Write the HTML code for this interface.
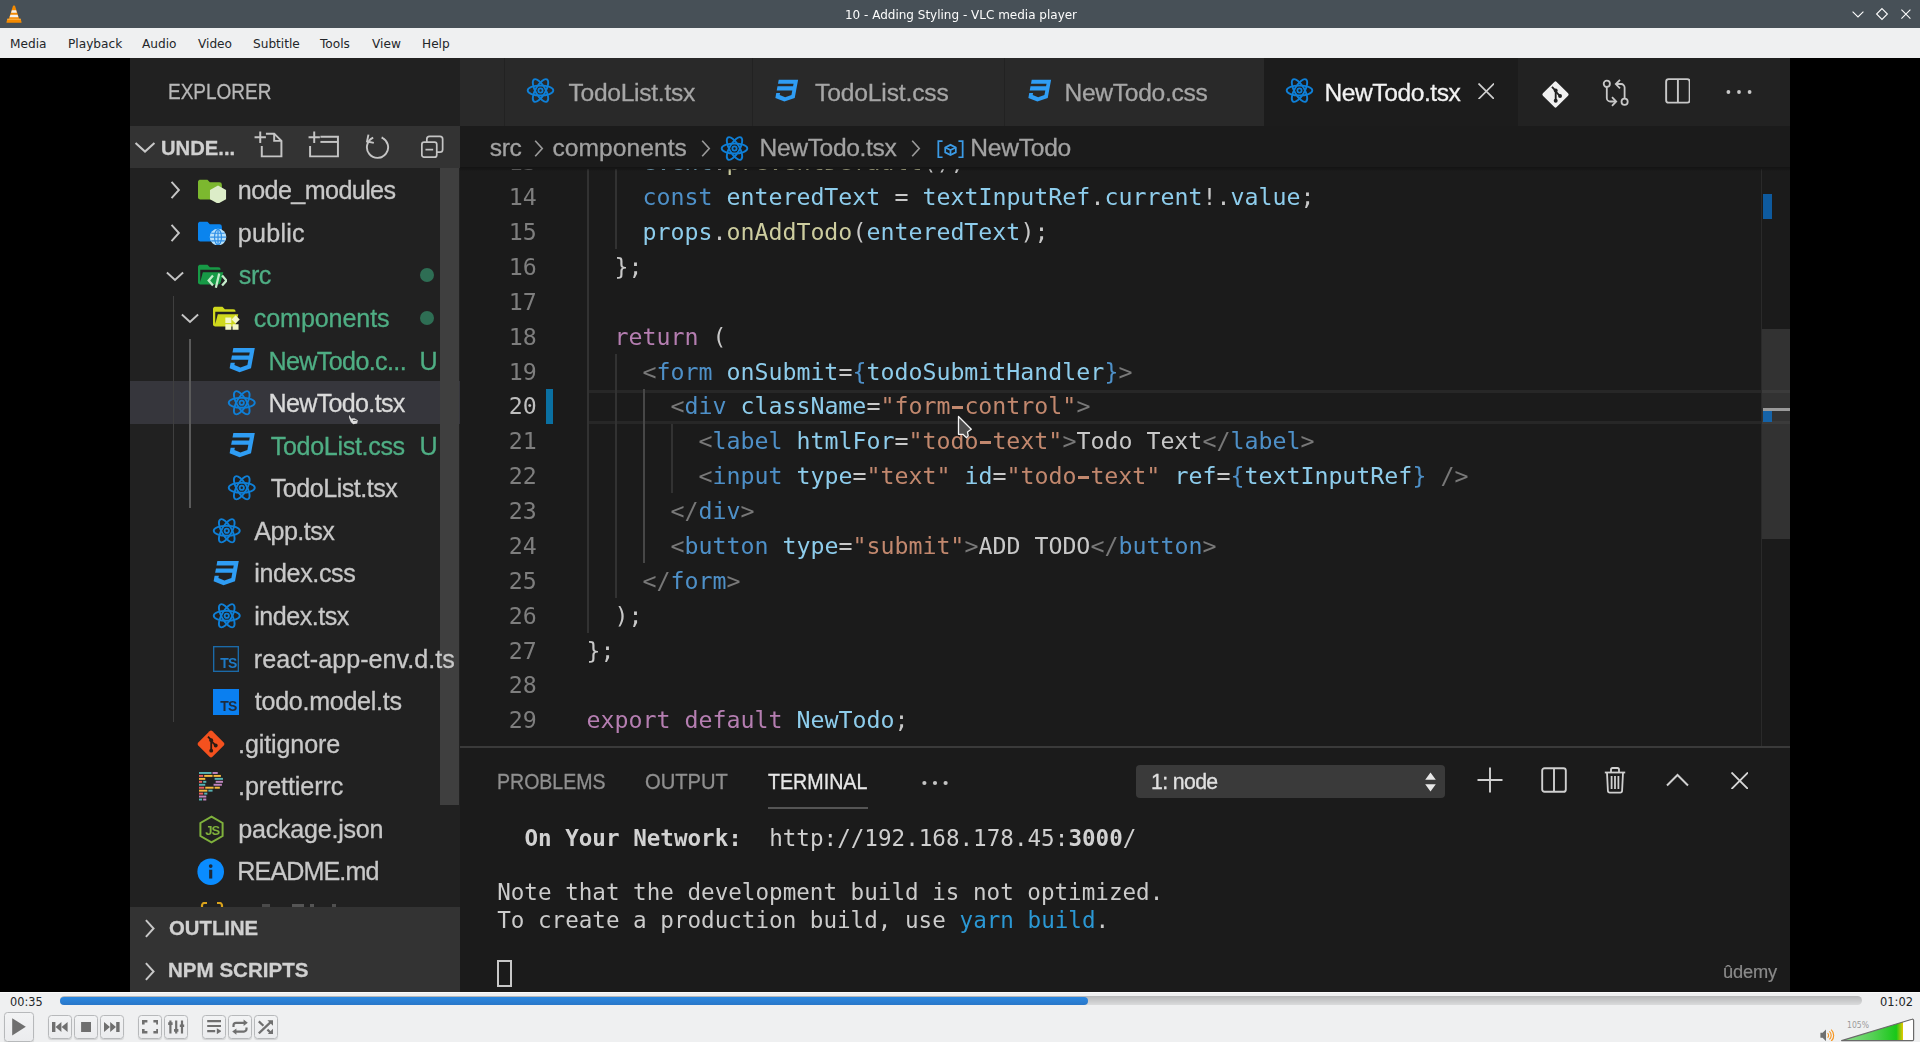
<!DOCTYPE html>
<html lang="en">
<head>
<meta charset="utf-8">
<title>10 - Adding Styling - VLC media player</title>
<style>
*{box-sizing:border-box;margin:0;padding:0}
html,body{width:1920px;height:1042px;overflow:hidden;background:#eff0f1}
body{position:relative;font-family:"DejaVu Sans","Liberation Sans",sans-serif;color:#232629}
.abs{position:absolute}
.t{position:absolute;white-space:pre;line-height:1}
.fs{font-family:"Liberation Sans",sans-serif}
#vsin .fs{-webkit-text-stroke:0.3px currentColor}
.fm{font-family:"DejaVu Sans Mono","Liberation Mono",monospace}
.fu{font-family:"DejaVu Sans","Liberation Sans",sans-serif}
#titlebar{position:absolute;left:0;top:0;width:1920px;height:28px;background:#475057}
#title{position:absolute;left:1px;top:1px;width:1920px;height:27px;line-height:29px;text-align:center;color:#fcfcfc;font-size:12px;will-change:transform}
#menubar{position:absolute;left:0;top:28px;width:1920px;height:30px;background:#eff0f1}
#menubar span{position:absolute;top:0;height:30px;line-height:32px;font-size:12.15px;color:#232629;white-space:nowrap}
#video{position:absolute;left:0;top:58px;width:1920px;height:934px;background:#000;overflow:hidden}
#vs{position:absolute;left:130px;top:0;width:1660px;height:934px;background:#1b1b1b;overflow:hidden}
#vsin{position:absolute;left:-130px;top:-58px;width:1920px;height:1042px;filter:blur(0.65px);will-change:transform}
.btn{border:1px solid #b7b9bb;border-radius:3.5px;background:linear-gradient(#f2f3f4,#ebecee);box-shadow:0 1px 1px rgba(0,0,0,0.13)}
</style>
</head>
<body>
<div id="titlebar"></div>
<div id="title">10 - Adding Styling - VLC media player</div>
<svg class="abs" style="left:1850.0px;top:6.0px" width="16.0" height="16.0" viewBox="0 0 16 16" ><path d="M2.600 5.600L8 11L13.400 5.600" fill="none" stroke="#fcfcfc" stroke-width="1.1"/></svg>
<svg class="abs" style="left:1874.0px;top:6.0px" width="16.0" height="16.0" viewBox="0 0 16 16" ><path d="M8 2.600L13.400 8L8 13.400L2.600 8z" fill="none" stroke="#fcfcfc" stroke-width="1.1"/></svg>
<svg class="abs" style="left:1898.0px;top:6.0px" width="16.0" height="16.0" viewBox="0 0 16 16" ><path d="M3.400 3.600L12.400 12.600M12.400 3.600L3.400 12.600" fill="none" stroke="#fcfcfc" stroke-width="1.1"/></svg>
<svg class="abs" style="left:5.4px;top:4.3px" width="20.0" height="20.0" viewBox="0 0 20 20" ><path d="M8 1.800q1-0.700 2 0l4.200 13.200H3.800z" fill="#f58a00"/><path d="M6.900 6.300h4.200l0.800 2.500H6.100z" fill="#f2f2f2"/><path d="M5.400 10.700h7.200l0.800 2.500H4.600z" fill="#f2f2f2"/><path d="M2.400 14.800h13.200l1 3.500q0.100 0.400-0.400 0.400H1.800q-0.500 0-0.400-0.400z" fill="#f58a00"/><path d="M2.400 14.800h13.200l0.300 1H2.100z" fill="#f9b450"/></svg>
<div id="menubar">
<span style="left:10px">Media</span>
<span style="left:68px">Playback</span>
<span style="left:142px">Audio</span>
<span style="left:198px">Video</span>
<span style="left:253px">Subtitle</span>
<span style="left:320px">Tools</span>
<span style="left:372px">View</span>
<span style="left:422px">Help</span>
</div>
<div id="video"><div id="vs"><div id="vsin">
<div class="abs" style="left:130px;top:58px;width:330px;height:934px;background:#212121"></div>
<span class="t fs" style="left:168.3px;top:81.2px;font-size:22.0px;color:#b8b8b8;transform:scaleX(0.8632);transform-origin:0 0;">EXPLORER</span>
<div class="abs" style="left:130px;top:126px;width:330px;height:42px;background:#333333"></div>
<svg class="abs" style="left:131.2px;top:133.0px" width="28.0" height="28.0" viewBox="0 0 16 16" ><path fill="none" stroke="#c8c8c8" stroke-width="1.15" d="M2.6 5.7 L8 10.6 L13.4 5.7"/></svg>
<span class="t fs" style="left:160.6px;top:137.6px;font-size:20.8px;color:#d0d0d0;font-weight:bold;transform:scaleX(0.9720);transform-origin:0 0;">UNDE...</span>
<svg class="abs" style="left:252.6px;top:129.8px" width="31.0" height="29.0" viewBox="0 0 30 28" ><g fill="none" stroke="#c5c5c5" stroke-width="1.9"><path d="M7 1.5v11M1.5 7h11"/><path d="M12.5 3.5h8l7 7v15h-19v-10"/><path d="M20.5 3.5v7h7"/></g></svg>
<svg class="abs" style="left:306.6px;top:129.8px" width="33.0" height="29.0" viewBox="0 0 32 28" ><g fill="none" stroke="#c5c5c5" stroke-width="1.9"><path d="M7 1.5v11M1.5 7h11"/><path d="M13 6.5h17v19h-27v-10"/><path d="M13 11.5h17"/></g></svg>
<svg class="abs" style="left:364.0px;top:133.0px" width="27.0" height="26.0" viewBox="0 0 27 26" ><g fill="none" stroke="#c5c5c5" stroke-width="1.9"><path d="M9.2 4.6A10.6 10.6 0 1 0 17.6 4.5"/><path d="M3.6 2.2v7h7" transform="rotate(12 7 6)"/></g></svg>
<svg class="abs" style="left:420.0px;top:134.6px" width="24.5" height="23.5" viewBox="0 0 26 26" ><g fill="none" stroke="#c5c5c5" stroke-width="1.9"><rect x="1.5" y="8" width="16.5" height="16.5" rx="2.5"/><path d="M7 8V4.5a3 3 0 0 1 3-3h11.5a3 3 0 0 1 3 3V16a3 3 0 0 1-3 3H18"/><path d="M5.5 16.2h8.5"/></g></svg>
<div class="abs" style="left:130px;top:381px;width:330px;height:42.5px;background:#36363c"></div>
<div class="abs" style="left:440.3px;top:168px;width:19.2px;height:637px;background:#3f3f3f"></div>
<div class="abs" style="left:459.5px;top:168px;width:0.500px;height:739px;background:#262626"></div>
<div class="abs" style="left:173.3px;top:296px;width:1.2px;height:426px;background:#3f3f3f"></div>
<div class="abs" style="left:189px;top:339px;width:1.6px;height:169px;background:#5a5a5a"></div>
<span class="t fs" style="left:237.8px;top:178.2px;font-size:25.1px;color:#c8c8c8;letter-spacing:-0.58px;">node_modules</span>
<span class="t fs" style="left:237.8px;top:220.7px;font-size:25.1px;color:#c8c8c8;letter-spacing:0.26px;">public</span>
<span class="t fs" style="left:238.8px;top:263.3px;font-size:25.1px;color:#4fae84;letter-spacing:-0.45px;">src</span>
<span class="t fs" style="left:253.8px;top:305.9px;font-size:25.1px;color:#4fae84;letter-spacing:-0.10px;">components</span>
<span class="t fs" style="left:268.5px;top:348.5px;font-size:25.1px;color:#4fae84;letter-spacing:-0.63px;">NewTodo.c...</span>
<span class="t fs" style="left:268.5px;top:391.1px;font-size:25.1px;color:#dadada;letter-spacing:-0.68px;">NewTodo.tsx</span>
<span class="t fs" style="left:270.8px;top:433.6px;font-size:25.1px;color:#4fae84;letter-spacing:-0.34px;">TodoList.css</span>
<span class="t fs" style="left:270.8px;top:476.2px;font-size:25.1px;color:#c8c8c8;letter-spacing:-0.49px;">TodoList.tsx</span>
<span class="t fs" style="left:254.3px;top:518.8px;font-size:25.1px;color:#c8c8c8;letter-spacing:-0.54px;">App.tsx</span>
<span class="t fs" style="left:254.3px;top:561.4px;font-size:25.1px;color:#c8c8c8;letter-spacing:-0.39px;">index.css</span>
<span class="t fs" style="left:254.3px;top:604.0px;font-size:25.1px;color:#c8c8c8;letter-spacing:-0.51px;">index.tsx</span>
<span class="t fs" style="left:253.8px;top:646.5px;font-size:25.1px;color:#c8c8c8;letter-spacing:0.04px;">react-app-env.d.ts</span>
<span class="t fs" style="left:254.8px;top:689.1px;font-size:25.1px;color:#c8c8c8;letter-spacing:-0.29px;">todo.model.ts</span>
<span class="t fs" style="left:238.1px;top:731.7px;font-size:25.1px;color:#c8c8c8;letter-spacing:-0.13px;">.gitignore</span>
<span class="t fs" style="left:238.1px;top:774.3px;font-size:25.1px;color:#c8c8c8;letter-spacing:-0.08px;">.prettierrc</span>
<span class="t fs" style="left:238.3px;top:816.9px;font-size:25.1px;color:#c8c8c8;letter-spacing:-0.25px;">package.json</span>
<span class="t fs" style="left:237.3px;top:859.4px;font-size:25.1px;color:#c8c8c8;letter-spacing:-0.89px;">README.md</span>
<span class="t fs" style="left:419.6px;top:348.5px;font-size:25.1px;color:#4fae84;">U</span>
<span class="t fs" style="left:419.6px;top:433.6px;font-size:25.1px;color:#4fae84;">U</span>
<div class="abs" style="left:419.5px;top:260.3px;width:14.2px;height:14.2px;border-radius:50%;background:#2e6e54;margin-top:8px"></div>
<div class="abs" style="left:419.5px;top:302.9px;width:14.2px;height:14.2px;border-radius:50%;background:#2e6e54;margin-top:8px"></div>
<svg class="abs" style="left:162.5px;top:178.4px" width="24.0" height="24.0" viewBox="0 0 16 16" ><path fill="none" stroke="#c5c5c5" stroke-width="1.3" d="M5.7 2.6 L10.6 8 L5.7 13.4"/></svg>
<svg class="abs" style="left:162.5px;top:221.0px" width="24.0" height="24.0" viewBox="0 0 16 16" ><path fill="none" stroke="#c5c5c5" stroke-width="1.3" d="M5.7 2.6 L10.6 8 L5.7 13.4"/></svg>
<svg class="abs" style="left:162.5px;top:263.7px" width="24.0" height="24.0" viewBox="0 0 16 16" ><path fill="none" stroke="#c5c5c5" stroke-width="1.3" d="M2.6 5.7 L8 10.6 L13.4 5.7"/></svg>
<svg class="abs" style="left:178.2px;top:306.3px" width="24.0" height="24.0" viewBox="0 0 16 16" ><path fill="none" stroke="#c5c5c5" stroke-width="1.3" d="M2.6 5.7 L8 10.6 L13.4 5.7"/></svg>
<svg class="abs" style="left:197.6px;top:178.6px" width="29.0" height="24.0" viewBox="0 0 24 20" ><path fill="#7cb82f" d="M10 4H4c-1.11 0-2 .89-2 2v12c0 1.1.9 2 2 2h16c1.1 0 2-.9 2-2V8a2 2 0 0 0-2-2h-8l-2-2z" transform="translate(-2.2,-3.4) scale(1.0,1.02)"/><path fill="#dcedc8" d="M16.6 5.400 L23.300 9.200 L23.300 16.800 L16.600 20.600 L9.900 16.800 L9.900 9.200 z"/></svg>
<svg class="abs" style="left:197.6px;top:221.2px" width="29.0" height="24.0" viewBox="0 0 24 20" ><path fill="#0a84ee" d="M10 4H4c-1.11 0-2 .89-2 2v12c0 1.1.9 2 2 2h16c1.1 0 2-.9 2-2V8a2 2 0 0 0-2-2h-8l-2-2z" transform="translate(-2.2,-3.4) scale(1.0,1.02)"/><circle cx="16.600" cy="13.400" r="6.900" fill="#b9e2fb"/><g fill="none" stroke="#2f8fe6" stroke-width="1"><ellipse cx="16.600" cy="13.400" rx="2.900" ry="6.400"/><path d="M10 13.400h13.200M16.600 6.800v13.200M11 10.200h11.200M11 16.600h11.200"/></g></svg>
<svg class="abs" style="left:197.6px;top:263.8px" width="29.0" height="24.0" viewBox="0 0 24 20" ><path fill="#179a46" d="M19 20H4c-1.11 0-2-.9-2-2V6c0-1.11.89-2 2-2h6l2 2h7a2 2 0 0 1 2 2H4v10l2.14-8h17.07l-2.28 8.5c-.23.87-1.01 1.5-1.93 1.5z" transform="translate(-2.2,-3.4) scale(1.0,1.02)"/><g fill="none" stroke="#c4ecca" stroke-width="1.900"><path d="M12.400 9.600 L8.800 13.800 L12.400 18"/><path d="M20 9.600 L23.600 13.800 L20 18"/><path d="M17.600 8 L14.800 19.800"/></g></svg>
<svg class="abs" style="left:213.0px;top:306.4px" width="29.0" height="24.0" viewBox="0 0 24 20" ><path fill="#cfd81c" d="M19 20H4c-1.11 0-2-.9-2-2V6c0-1.11.89-2 2-2h6l2 2h7a2 2 0 0 1 2 2H4v10l2.14-8h17.07l-2.28 8.5c-.23.87-1.01 1.5-1.93 1.5z" transform="translate(-2.2,-3.4) scale(1.0,1.02)"/><g fill="#f4f7c6"><rect x="10.200" y="9.600" width="5" height="4.600"/><rect x="16.400" y="8.800" width="4.800" height="4.800" transform="rotate(45 18.800 11.200)"/><rect x="10.200" y="15.200" width="5" height="4.600"/><rect x="16.200" y="15.200" width="5" height="4.600"/></g></svg>
<svg class="abs" style="left:226.8px;top:343.7px" width="30.4" height="32.2" viewBox="0 0 24 24" preserveAspectRatio="none"><path fill="#2f9df4" d="m5 3l-.65 3.34h13.59L17.5 8.5H3.92l-.66 3.33h13.59l-.76 3.81l-5.48 1.81l-4.75-1.81l.33-1.64H2.85l-.79 4l7.85 3l9.05-3l1.2-6.03l.24-1.21L21.94 3z"/></svg>
<svg class="abs" style="left:227.4px;top:388.1px" width="29.5" height="29.5" viewBox="0 0 24 24" ><g fill="none" stroke="#0f7fd6" stroke-width="1.55"><ellipse cx="12" cy="12" rx="10.6" ry="4.1"/><ellipse cx="12" cy="12" rx="10.6" ry="4.1" transform="rotate(60 12 12)"/><ellipse cx="12" cy="12" rx="10.6" ry="4.1" transform="rotate(120 12 12)"/><circle cx="12" cy="12" r="1.75" stroke-width="1.5"/></g></svg>
<svg class="abs" style="left:226.8px;top:428.7px" width="30.4" height="32.2" viewBox="0 0 24 24" preserveAspectRatio="none"><path fill="#2f9df4" d="m5 3l-.65 3.34h13.59L17.5 8.5H3.92l-.66 3.33h13.59l-.76 3.81l-5.48 1.81l-4.75-1.81l.33-1.64H2.85l-.79 4l7.85 3l9.05-3l1.2-6.03l.24-1.21L21.94 3z"/></svg>
<svg class="abs" style="left:227.4px;top:473.4px" width="29.5" height="29.5" viewBox="0 0 24 24" ><g fill="none" stroke="#0f7fd6" stroke-width="1.55"><ellipse cx="12" cy="12" rx="10.6" ry="4.1"/><ellipse cx="12" cy="12" rx="10.6" ry="4.1" transform="rotate(60 12 12)"/><ellipse cx="12" cy="12" rx="10.6" ry="4.1" transform="rotate(120 12 12)"/><circle cx="12" cy="12" r="1.75" stroke-width="1.5"/></g></svg>
<svg class="abs" style="left:211.8px;top:516.0px" width="29.5" height="29.5" viewBox="0 0 24 24" ><g fill="none" stroke="#0f7fd6" stroke-width="1.55"><ellipse cx="12" cy="12" rx="10.6" ry="4.1"/><ellipse cx="12" cy="12" rx="10.6" ry="4.1" transform="rotate(60 12 12)"/><ellipse cx="12" cy="12" rx="10.6" ry="4.1" transform="rotate(120 12 12)"/><circle cx="12" cy="12" r="1.75" stroke-width="1.5"/></g></svg>
<svg class="abs" style="left:211.2px;top:556.7px" width="30.4" height="32.2" viewBox="0 0 24 24" preserveAspectRatio="none"><path fill="#2f9df4" d="m5 3l-.65 3.34h13.59L17.5 8.5H3.92l-.66 3.33h13.59l-.76 3.81l-5.48 1.81l-4.75-1.81l.33-1.64H2.85l-.79 4l7.85 3l9.05-3l1.2-6.03l.24-1.21L21.94 3z"/></svg>
<svg class="abs" style="left:211.8px;top:601.2px" width="29.5" height="29.5" viewBox="0 0 24 24" ><g fill="none" stroke="#0f7fd6" stroke-width="1.55"><ellipse cx="12" cy="12" rx="10.6" ry="4.1"/><ellipse cx="12" cy="12" rx="10.6" ry="4.1" transform="rotate(60 12 12)"/><ellipse cx="12" cy="12" rx="10.6" ry="4.1" transform="rotate(120 12 12)"/><circle cx="12" cy="12" r="1.75" stroke-width="1.5"/></g></svg>
<svg class="abs" style="left:212.8px;top:646.0px" width="26.0" height="26.0" viewBox="0 0 27 27" ><rect x="0.7" y="0.7" width="25.6" height="25.6" fill="none" stroke="#1b6aa8" stroke-width="1.4"/><text x="7.4" y="23.2" font-family="Liberation Sans,sans-serif" font-weight="bold" font-size="14.5" fill="#1e79c4" letter-spacing="-0.6">TS</text></svg>
<svg class="abs" style="left:212.8px;top:688.6px" width="26.0" height="26.0" viewBox="0 0 27 27" ><rect x="0" y="0" width="27" height="27" fill="#0a7ff0"/><text x="7.4" y="23.2" font-family="Liberation Sans,sans-serif" font-weight="bold" font-size="14.5" fill="#1f2c3d" letter-spacing="-0.6">TS</text></svg>
<svg class="abs" style="left:196.2px;top:729.4px" width="30.0" height="30.0" viewBox="0 0 28 28" ><rect x="4.6" y="4.6" width="18.8" height="18.8" rx="2" fill="#f4511e" transform="rotate(45 14 14)"/><g fill="none" stroke="#2a1a12" stroke-width="1.7"><path d="M11.2 7.2 L14.2 10.4 V19.5"/><path d="M14.2 11.2 L18 15"/></g><circle cx="14.2" cy="20.2" r="1.8" fill="#2a1a12"/><circle cx="18.4" cy="15.4" r="1.8" fill="#2a1a12"/><circle cx="14.2" cy="10.4" r="1.8" fill="#2a1a12"/></svg>
<svg class="abs" style="left:198.6px;top:772.2px" width="25.0" height="29.5" viewBox="0 0 24 26" preserveAspectRatio="none"><rect x="0" y="0.0" width="12" height="1.7" fill="#56b3b4"/><rect x="13" y="0.0" width="5" height="1.7" fill="#bf85bf"/><rect x="0" y="2.6" width="4" height="1.7" fill="#ea5e5e"/><rect x="5" y="2.6" width="8" height="1.7" fill="#f7ba3e"/><rect x="14" y="2.6" width="7" height="1.7" fill="#f7ba3e"/><rect x="0" y="5.2" width="6" height="1.7" fill="#f7ba3e"/><rect x="15" y="5.2" width="8" height="1.7" fill="#56b3b4"/><rect x="0" y="7.8" width="3" height="1.7" fill="#ea5e5e"/><rect x="4" y="7.8" width="3" height="1.7" fill="#56b3b4"/><rect x="16" y="7.8" width="7" height="1.7" fill="#bf85bf"/><rect x="0" y="10.4" width="6" height="1.7" fill="#56b3b4"/><rect x="14" y="10.4" width="8" height="1.7" fill="#bf85bf"/><rect x="0" y="13.0" width="5" height="1.7" fill="#ea5e5e"/><rect x="6" y="13.0" width="8" height="1.7" fill="#f7ba3e"/><rect x="15" y="13.0" width="5" height="1.7" fill="#f7ba3e"/><rect x="0" y="15.6" width="8" height="1.7" fill="#f7ba3e"/><rect x="9" y="15.6" width="4" height="1.7" fill="#56b3b4"/><rect x="0" y="18.2" width="4" height="1.7" fill="#ea5e5e"/><rect x="5" y="18.2" width="3" height="1.7" fill="#56b3b4"/><rect x="0" y="20.8" width="7" height="1.7" fill="#bf85bf"/><rect x="0" y="23.4" width="3" height="1.7" fill="#56b3b4"/><rect x="4" y="23.4" width="3" height="1.7" fill="#bf85bf"/></svg>
<svg class="abs" style="left:198.0px;top:814.6px" width="27.0" height="29.0" viewBox="0 0 27 29" ><path d="M13.5 1.6 L24.6 8 V21 L13.5 27.4 L2.4 21 V8 Z" fill="none" stroke="#7fb13c" stroke-width="2"/><text x="7.2" y="19.8" font-family="Liberation Sans,sans-serif" font-weight="bold" font-size="13" fill="#7fb13c" letter-spacing="-1">JS</text></svg>
<svg class="abs" style="left:197.3px;top:857.8px" width="27.4" height="27.4" viewBox="0 0 28 28" ><circle cx="14" cy="14" r="13.6" fill="#0a8cff"/><rect x="12.4" y="12" width="3.2" height="9" fill="#1c2a3a"/><circle cx="14" cy="8.2" r="1.9" fill="#1c2a3a"/></svg>
<svg class="abs" style="left:199.0px;top:901.5px" width="26.0" height="6.0" viewBox="0 0 26 6" ><path d="M3 6V3.5A2.5 2.5 0 0 1 5.5 1H8M23 6V3.5A2.5 2.5 0 0 0 20.500 1H18" fill="none" stroke="#d9a21b" stroke-width="2.2"/></svg>
<div class="abs" style="left:262px;top:904px;width:100px;height:3px;background:linear-gradient(90deg,#4a4a4a 0 8%,transparent 8% 30%,#555 30% 42%,transparent 42% 48%,#555 48% 52%,transparent 52% 70%,#505050 70% 74%,transparent 74%)"></div>
<svg class="abs" style="left:347.5px;top:413.5px" width="11.0" height="11.0" viewBox="0 0 11 11" ><path d="M1.200 0.800L3.200 4.600L6.400 4.200L9.800 6.200L9.200 9.400L5.200 10.200L2.800 8L1 3.600z" fill="#dcdcdc"/><path d="M5 6.400h3.600" stroke="#444" stroke-width="0.900"/></svg>
<div class="abs" style="left:130px;top:907px;width:330px;height:85px;background:#333333"></div>
<svg class="abs" style="left:137.0px;top:915.7px" width="25.0" height="25.0" viewBox="0 0 16 16" ><path fill="none" stroke="#c8c8c8" stroke-width="1.25" d="M5.7 2.6 L10.6 8 L5.7 13.4"/></svg>
<svg class="abs" style="left:137.0px;top:958.5px" width="25.0" height="25.0" viewBox="0 0 16 16" ><path fill="none" stroke="#c8c8c8" stroke-width="1.25" d="M5.7 2.6 L10.6 8 L5.7 13.4"/></svg>
<span class="t fs" style="left:169.0px;top:917.6px;font-size:20.8px;color:#d0d0d0;font-weight:bold;transform:scaleX(0.9770);transform-origin:0 0;">OUTLINE</span>
<span class="t fs" style="left:168.0px;top:960.4px;font-size:20.8px;color:#d0d0d0;font-weight:bold;transform:scaleX(0.9883);transform-origin:0 0;">NPM SCRIPTS</span>
<div class="abs" style="left:460px;top:168.5px;width:1330px;height:578px;background:#1b1b1b"></div>
<div class="abs" style="left:588px;top:389.8px;width:1202px;height:34px;border-top:3.7px solid #272727;border-bottom:3.5px solid #272727;background:#1b1b1b"></div>
<div class="abs" style="left:1761px;top:168.5px;width:1.3px;height:578px;background:#2a2a2a"></div>
<div class="abs" style="left:1762.3px;top:329px;width:27.7px;height:210px;background:rgba(110,110,110,0.28)"></div>
<div class="abs" style="left:1762.5px;top:193.5px;width:9px;height:25.5px;background:#0e5a9e"></div>
<div class="abs" style="left:1762.5px;top:407.5px;width:27.5px;height:3px;background:#9a9a9a"></div>
<div class="abs" style="left:1762.5px;top:410.5px;width:9px;height:11px;background:#1563a8"></div>
<div class="abs" style="left:545.8px;top:389.2px;width:7px;height:34.6px;background:#0a70a2"></div>
<div class="abs" style="left:587.3px;top:144.5px;width:2.1px;height:488.1px;background:#323232"></div>
<div class="abs" style="left:615.3px;top:144.5px;width:2.1px;height:104.5px;background:#323232"></div>
<div class="abs" style="left:615.3px;top:353.8px;width:2.1px;height:244.0px;background:#323232"></div>
<div class="abs" style="left:643.3px;top:388.6px;width:2.1px;height:174.3px;background:#474747"></div>
<div class="abs" style="left:671.3px;top:423.5px;width:2.1px;height:69.7px;background:#323232"></div>
<span class="t fm" style="left:508.7px;top:150.4px;font-size:23.254px;color:#7e7e7e;">13</span>
<span class="t fm" style="left:508.7px;top:185.2px;font-size:23.254px;color:#7e7e7e;">14</span>
<span class="t fm" style="left:508.7px;top:220.1px;font-size:23.254px;color:#7e7e7e;">15</span>
<span class="t fm" style="left:508.7px;top:255.0px;font-size:23.254px;color:#7e7e7e;">16</span>
<span class="t fm" style="left:508.7px;top:289.8px;font-size:23.254px;color:#7e7e7e;">17</span>
<span class="t fm" style="left:508.7px;top:324.7px;font-size:23.254px;color:#7e7e7e;">18</span>
<span class="t fm" style="left:508.7px;top:359.6px;font-size:23.254px;color:#7e7e7e;">19</span>
<span class="t fm" style="left:508.7px;top:394.4px;font-size:23.254px;color:#bebebe;">20</span>
<span class="t fm" style="left:508.7px;top:429.3px;font-size:23.254px;color:#7e7e7e;">21</span>
<span class="t fm" style="left:508.7px;top:464.2px;font-size:23.254px;color:#7e7e7e;">22</span>
<span class="t fm" style="left:508.7px;top:499.1px;font-size:23.254px;color:#7e7e7e;">23</span>
<span class="t fm" style="left:508.7px;top:533.9px;font-size:23.254px;color:#7e7e7e;">24</span>
<span class="t fm" style="left:508.7px;top:568.8px;font-size:23.254px;color:#7e7e7e;">25</span>
<span class="t fm" style="left:508.7px;top:603.7px;font-size:23.254px;color:#7e7e7e;">26</span>
<span class="t fm" style="left:508.7px;top:638.5px;font-size:23.254px;color:#7e7e7e;">27</span>
<span class="t fm" style="left:508.7px;top:673.4px;font-size:23.254px;color:#7e7e7e;">28</span>
<span class="t fm" style="left:508.7px;top:708.3px;font-size:23.254px;color:#7e7e7e;">29</span>
<span class="t fm" style="left:642.4px;top:150.4px;font-size:23.254px;color:#8ecdec;word-spacing:0;">event</span>
<span class="t fm" style="left:712.4px;top:150.4px;font-size:23.254px;color:#c8c8c8;word-spacing:0;">.</span>
<span class="t fm" style="left:726.4px;top:150.4px;font-size:23.254px;color:#cdcd9f;word-spacing:0;">preventDefault</span>
<span class="t fm" style="left:922.4px;top:150.4px;font-size:23.254px;color:#c8c8c8;word-spacing:0;">();</span>
<span class="t fm" style="left:642.4px;top:185.2px;font-size:23.254px;color:#4e90c8;word-spacing:0;">const</span>
<span class="t fm" style="left:726.4px;top:185.2px;font-size:23.254px;color:#8ecdec;word-spacing:0;">enteredText</span>
<span class="t fm" style="left:894.4px;top:185.2px;font-size:23.254px;color:#c8c8c8;word-spacing:0;">=</span>
<span class="t fm" style="left:922.4px;top:185.2px;font-size:23.254px;color:#8ecdec;word-spacing:0;">textInputRef</span>
<span class="t fm" style="left:1090.4px;top:185.2px;font-size:23.254px;color:#c8c8c8;word-spacing:0;">.</span>
<span class="t fm" style="left:1104.4px;top:185.2px;font-size:23.254px;color:#8ecdec;word-spacing:0;">current</span>
<span class="t fm" style="left:1202.4px;top:185.2px;font-size:23.254px;color:#c8c8c8;word-spacing:0;">!.</span>
<span class="t fm" style="left:1230.4px;top:185.2px;font-size:23.254px;color:#8ecdec;word-spacing:0;">value</span>
<span class="t fm" style="left:1300.4px;top:185.2px;font-size:23.254px;color:#c8c8c8;word-spacing:0;">;</span>
<span class="t fm" style="left:642.4px;top:220.1px;font-size:23.254px;color:#8ecdec;word-spacing:0;">props</span>
<span class="t fm" style="left:712.4px;top:220.1px;font-size:23.254px;color:#c8c8c8;word-spacing:0;">.</span>
<span class="t fm" style="left:726.4px;top:220.1px;font-size:23.254px;color:#cdcd9f;word-spacing:0;">onAddTodo</span>
<span class="t fm" style="left:852.4px;top:220.1px;font-size:23.254px;color:#c8c8c8;word-spacing:0;">(</span>
<span class="t fm" style="left:866.4px;top:220.1px;font-size:23.254px;color:#8ecdec;word-spacing:0;">enteredText</span>
<span class="t fm" style="left:1020.4px;top:220.1px;font-size:23.254px;color:#c8c8c8;word-spacing:0;">);</span>
<span class="t fm" style="left:614.4px;top:255.0px;font-size:23.254px;color:#c8c8c8;word-spacing:0;">};</span>
<span class="t fm" style="left:614.4px;top:324.7px;font-size:23.254px;color:#b57eb1;word-spacing:0;">return</span>
<span class="t fm" style="left:712.4px;top:324.7px;font-size:23.254px;color:#c8c8c8;word-spacing:0;">(</span>
<span class="t fm" style="left:642.4px;top:359.6px;font-size:23.254px;color:#787878;word-spacing:0;">&lt;</span>
<span class="t fm" style="left:656.4px;top:359.6px;font-size:23.254px;color:#4e90c8;word-spacing:0;">form</span>
<span class="t fm" style="left:726.4px;top:359.6px;font-size:23.254px;color:#8ecdec;word-spacing:0;">onSubmit</span>
<span class="t fm" style="left:838.4px;top:359.6px;font-size:23.254px;color:#c8c8c8;word-spacing:0;">=</span>
<span class="t fm" style="left:852.4px;top:359.6px;font-size:23.254px;color:#4e90c8;word-spacing:0;">{</span>
<span class="t fm" style="left:866.4px;top:359.6px;font-size:23.254px;color:#8ecdec;word-spacing:0;">todoSubmitHandler</span>
<span class="t fm" style="left:1104.4px;top:359.6px;font-size:23.254px;color:#4e90c8;word-spacing:0;">}</span>
<span class="t fm" style="left:1118.4px;top:359.6px;font-size:23.254px;color:#787878;word-spacing:0;">&gt;</span>
<span class="t fm" style="left:670.4px;top:394.4px;font-size:23.254px;color:#787878;word-spacing:0;">&lt;</span>
<span class="t fm" style="left:684.4px;top:394.4px;font-size:23.254px;color:#4e90c8;word-spacing:0;">div</span>
<span class="t fm" style="left:740.4px;top:394.4px;font-size:23.254px;color:#8ecdec;word-spacing:0;">className</span>
<span class="t fm" style="left:866.4px;top:394.4px;font-size:23.254px;color:#c8c8c8;word-spacing:0;">=</span>
<span class="t fm" style="left:880.4px;top:394.4px;font-size:23.254px;color:#c2886e;word-spacing:0;">"form-control"</span>
<span class="t fm" style="left:1076.4px;top:394.4px;font-size:23.254px;color:#787878;word-spacing:0;">&gt;</span>
<span class="t fm" style="left:698.4px;top:429.3px;font-size:23.254px;color:#787878;word-spacing:0;">&lt;</span>
<span class="t fm" style="left:712.4px;top:429.3px;font-size:23.254px;color:#4e90c8;word-spacing:0;">label</span>
<span class="t fm" style="left:796.4px;top:429.3px;font-size:23.254px;color:#8ecdec;word-spacing:0;">htmlFor</span>
<span class="t fm" style="left:894.4px;top:429.3px;font-size:23.254px;color:#c8c8c8;word-spacing:0;">=</span>
<span class="t fm" style="left:908.4px;top:429.3px;font-size:23.254px;color:#c2886e;word-spacing:0;">"todo-text"</span>
<span class="t fm" style="left:1062.4px;top:429.3px;font-size:23.254px;color:#787878;word-spacing:0;">&gt;</span>
<span class="t fm" style="left:1076.4px;top:429.3px;font-size:23.254px;color:#c8c8c8;word-spacing:0;">Todo Text</span>
<span class="t fm" style="left:1202.4px;top:429.3px;font-size:23.254px;color:#787878;word-spacing:0;">&lt;/</span>
<span class="t fm" style="left:1230.4px;top:429.3px;font-size:23.254px;color:#4e90c8;word-spacing:0;">label</span>
<span class="t fm" style="left:1300.4px;top:429.3px;font-size:23.254px;color:#787878;word-spacing:0;">&gt;</span>
<span class="t fm" style="left:698.4px;top:464.2px;font-size:23.254px;color:#787878;word-spacing:0;">&lt;</span>
<span class="t fm" style="left:712.4px;top:464.2px;font-size:23.254px;color:#4e90c8;word-spacing:0;">input</span>
<span class="t fm" style="left:796.4px;top:464.2px;font-size:23.254px;color:#8ecdec;word-spacing:0;">type</span>
<span class="t fm" style="left:852.4px;top:464.2px;font-size:23.254px;color:#c8c8c8;word-spacing:0;">=</span>
<span class="t fm" style="left:866.4px;top:464.2px;font-size:23.254px;color:#c2886e;word-spacing:0;">"text"</span>
<span class="t fm" style="left:964.4px;top:464.2px;font-size:23.254px;color:#8ecdec;word-spacing:0;">id</span>
<span class="t fm" style="left:992.4px;top:464.2px;font-size:23.254px;color:#c8c8c8;word-spacing:0;">=</span>
<span class="t fm" style="left:1006.4px;top:464.2px;font-size:23.254px;color:#c2886e;word-spacing:0;">"todo-text"</span>
<span class="t fm" style="left:1174.4px;top:464.2px;font-size:23.254px;color:#8ecdec;word-spacing:0;">ref</span>
<span class="t fm" style="left:1216.4px;top:464.2px;font-size:23.254px;color:#c8c8c8;word-spacing:0;">=</span>
<span class="t fm" style="left:1230.4px;top:464.2px;font-size:23.254px;color:#4e90c8;word-spacing:0;">{</span>
<span class="t fm" style="left:1244.4px;top:464.2px;font-size:23.254px;color:#8ecdec;word-spacing:0;">textInputRef</span>
<span class="t fm" style="left:1412.4px;top:464.2px;font-size:23.254px;color:#4e90c8;word-spacing:0;">}</span>
<span class="t fm" style="left:1440.4px;top:464.2px;font-size:23.254px;color:#787878;word-spacing:0;">/&gt;</span>
<span class="t fm" style="left:670.4px;top:499.1px;font-size:23.254px;color:#787878;word-spacing:0;">&lt;/</span>
<span class="t fm" style="left:698.4px;top:499.1px;font-size:23.254px;color:#4e90c8;word-spacing:0;">div</span>
<span class="t fm" style="left:740.4px;top:499.1px;font-size:23.254px;color:#787878;word-spacing:0;">&gt;</span>
<span class="t fm" style="left:670.4px;top:533.9px;font-size:23.254px;color:#787878;word-spacing:0;">&lt;</span>
<span class="t fm" style="left:684.4px;top:533.9px;font-size:23.254px;color:#4e90c8;word-spacing:0;">button</span>
<span class="t fm" style="left:782.4px;top:533.9px;font-size:23.254px;color:#8ecdec;word-spacing:0;">type</span>
<span class="t fm" style="left:838.4px;top:533.9px;font-size:23.254px;color:#c8c8c8;word-spacing:0;">=</span>
<span class="t fm" style="left:852.4px;top:533.9px;font-size:23.254px;color:#c2886e;word-spacing:0;">"submit"</span>
<span class="t fm" style="left:964.4px;top:533.9px;font-size:23.254px;color:#787878;word-spacing:0;">&gt;</span>
<span class="t fm" style="left:978.4px;top:533.9px;font-size:23.254px;color:#c8c8c8;word-spacing:0;">ADD TODO</span>
<span class="t fm" style="left:1090.4px;top:533.9px;font-size:23.254px;color:#787878;word-spacing:0;">&lt;/</span>
<span class="t fm" style="left:1118.4px;top:533.9px;font-size:23.254px;color:#4e90c8;word-spacing:0;">button</span>
<span class="t fm" style="left:1202.4px;top:533.9px;font-size:23.254px;color:#787878;word-spacing:0;">&gt;</span>
<span class="t fm" style="left:642.4px;top:568.8px;font-size:23.254px;color:#787878;word-spacing:0;">&lt;/</span>
<span class="t fm" style="left:670.4px;top:568.8px;font-size:23.254px;color:#4e90c8;word-spacing:0;">form</span>
<span class="t fm" style="left:726.4px;top:568.8px;font-size:23.254px;color:#787878;word-spacing:0;">&gt;</span>
<span class="t fm" style="left:614.4px;top:603.7px;font-size:23.254px;color:#c8c8c8;word-spacing:0;">);</span>
<span class="t fm" style="left:586.4px;top:638.5px;font-size:23.254px;color:#c8c8c8;word-spacing:0;">};</span>
<span class="t fm" style="left:586.4px;top:708.3px;font-size:23.254px;color:#b57eb1;word-spacing:0;">export</span>
<span class="t fm" style="left:684.4px;top:708.3px;font-size:23.254px;color:#b57eb1;word-spacing:0;">default</span>
<span class="t fm" style="left:796.4px;top:708.3px;font-size:23.254px;color:#8ecdec;word-spacing:0;">NewTodo</span>
<span class="t fm" style="left:894.4px;top:708.3px;font-size:23.254px;color:#c8c8c8;word-spacing:0;">;</span>
<div class="abs" style="left:951.7px;top:406.2px;width:11.4px;height:2.5px;background:#c2886e"></div>
<div class="abs" style="left:979.7px;top:441.1px;width:11.4px;height:2.5px;background:#c2886e"></div>
<div class="abs" style="left:1077.7px;top:476.0px;width:11.4px;height:2.5px;background:#c2886e"></div>
<svg class="abs" style="left:956.8px;top:415.4px" width="16.0" height="25.0" viewBox="-1.5 -1.5 16 25" ><path d="M0 0L0 17.800L4.400 17.800L8 21.200L9.700 19.400L9 15.600L12.800 12.800Z" fill="#4d4d4d" stroke="#f4f4f4" stroke-width="1.300" stroke-linejoin="round"/></svg>
<div class="abs" style="left:460px;top:58px;width:1330px;height:68px;background:#222222"></div>
<div class="abs" style="left:460px;top:58px;width:44px;height:68px;background:#292929"></div>
<div class="abs" style="left:505px;top:58px;width:246.5px;height:68px;background:#292929"></div>
<div class="abs" style="left:752.5px;top:58px;width:251.0px;height:68px;background:#292929"></div>
<div class="abs" style="left:1004.5px;top:58px;width:259.0px;height:68px;background:#292929"></div>
<div class="abs" style="left:1264px;top:58px;width:253.5px;height:68px;background:#1c1c1c"></div>
<svg class="abs" style="left:525.5px;top:75.5px" width="29.0" height="29.0" viewBox="0 0 24 24" ><g fill="none" stroke="#0f7fd6" stroke-width="1.55"><ellipse cx="12" cy="12" rx="10.6" ry="4.1"/><ellipse cx="12" cy="12" rx="10.6" ry="4.1" transform="rotate(60 12 12)"/><ellipse cx="12" cy="12" rx="10.6" ry="4.1" transform="rotate(120 12 12)"/><circle cx="12" cy="12" r="1.75" stroke-width="1.5"/></g></svg>
<span class="t fs" style="left:568.5px;top:80.8px;font-size:24.6px;color:#a6a6a6;letter-spacing:-0.28px;">TodoList.tsx</span>
<svg class="abs" style="left:773.2px;top:75.9px" width="27.5" height="29.2" viewBox="0 0 24 24" preserveAspectRatio="none"><path fill="#2f9df4" d="m5 3l-.65 3.34h13.59L17.5 8.5H3.92l-.66 3.33h13.59l-.76 3.81l-5.48 1.81l-4.75-1.81l.33-1.64H2.85l-.79 4l7.85 3l9.05-3l1.2-6.03l.24-1.21L21.94 3z"/></svg>
<span class="t fs" style="left:815.0px;top:80.8px;font-size:24.6px;color:#a6a6a6;letter-spacing:-0.14px;">TodoList.css</span>
<svg class="abs" style="left:1026.2px;top:75.9px" width="27.5" height="29.2" viewBox="0 0 24 24" preserveAspectRatio="none"><path fill="#2f9df4" d="m5 3l-.65 3.34h13.59L17.5 8.5H3.92l-.66 3.33h13.59l-.76 3.81l-5.48 1.81l-4.75-1.81l.33-1.64H2.85l-.79 4l7.85 3l9.05-3l1.2-6.03l.24-1.21L21.94 3z"/></svg>
<span class="t fs" style="left:1064.5px;top:80.8px;font-size:24.6px;color:#a6a6a6;letter-spacing:-0.30px;">NewTodo.css</span>
<svg class="abs" style="left:1284.7px;top:75.5px" width="29.0" height="29.0" viewBox="0 0 24 24" ><g fill="none" stroke="#0f7fd6" stroke-width="1.55"><ellipse cx="12" cy="12" rx="10.6" ry="4.1"/><ellipse cx="12" cy="12" rx="10.6" ry="4.1" transform="rotate(60 12 12)"/><ellipse cx="12" cy="12" rx="10.6" ry="4.1" transform="rotate(120 12 12)"/><circle cx="12" cy="12" r="1.75" stroke-width="1.5"/></g></svg>
<span class="t fs" style="left:1324.5px;top:80.8px;font-size:24.6px;color:#f2f2f2;letter-spacing:-0.45px;">NewTodo.tsx</span>
<svg class="abs" style="left:1477.9px;top:82.9px" width="16.6" height="16.6" viewBox="0 0 16.6 16.6" ><path fill="none" stroke="#cfcfcf" stroke-width="1.7" d="M0.5 0.5 L16.1 16.1 M16.1 0.5 L0.5 16.1"/></svg>
<svg class="abs" style="left:1540.5px;top:79.8px" width="29.0" height="29.0" viewBox="0 0 28 28" ><rect x="4.6" y="4.6" width="18.8" height="18.8" rx="1.6" fill="#f0f0f0" transform="rotate(45 14 14)"/><g fill="none" stroke="#222" stroke-width="1.8"><path d="M10.6 6.6 L14.2 10.4 V19.5"/><path d="M14.2 11.2 L18 15"/></g><circle cx="14.2" cy="20" r="1.9" fill="#222"/><circle cx="18.4" cy="15.4" r="1.9" fill="#222"/><circle cx="14.2" cy="10.2" r="1.9" fill="#222"/></svg>
<svg class="abs" style="left:1601.5px;top:78.8px" width="28.0" height="28.0" viewBox="0 0 28 28" ><g fill="none" stroke="#c8c8c8" stroke-width="1.8"><circle cx="4.8" cy="4.8" r="3.1"/><circle cx="22.6" cy="22.8" r="3.1"/><path d="M4.800 8V19a3.500 3.500 0 0 0 3.500 3.500H13.500"/><path d="M10 18.200l4.200 4.300l-4.200 4.300"/><path d="M22.600 19.500V8.500a3.500 3.500 0 0 0-3.500-3.500H14.500"/><path d="M18 0.800l-4.200 4.300l4.200 4.300"/></g></svg>
<svg class="abs" style="left:1664.6px;top:78.4px" width="25.8" height="25.8" viewBox="0 0 27 27" ><g fill="none" stroke="#c8c8c8" stroke-width="2"><rect x="1.2" y="1.2" width="24.6" height="24.6" rx="2.6"/><path d="M13.500 1.200v24.600"/></g></svg>
<svg class="abs" style="left:1725.0px;top:88.5px" width="28.0" height="6.0" viewBox="0 0 28 6" ><g fill="#c8c8c8"><circle cx="3.4" cy="3" r="1.9"/><circle cx="14" cy="3" r="1.9"/><circle cx="24.6" cy="3" r="1.9"/></g></svg>
<div class="abs" style="left:460px;top:126px;width:1330px;height:42.5px;background:#1b1b1b"></div>
<div class="abs" style="left:460px;top:167.2px;width:1330px;height:4px;background:linear-gradient(#131313,rgba(27,27,27,0))"></div>
<span class="t fs" style="left:489.8px;top:136.2px;font-size:24.6px;color:#a2a2a2;letter-spacing:-0.39px;">src</span>
<svg class="abs" style="left:527.1px;top:137.1px" width="23.0" height="23.0" viewBox="0 0 16 16" ><path fill="none" stroke="#9a9a9a" stroke-width="1.15" d="M5.7 2.6 L10.6 8 L5.7 13.4"/></svg>
<span class="t fs" style="left:552.5px;top:136.2px;font-size:24.6px;color:#a2a2a2;letter-spacing:0.04px;">components</span>
<svg class="abs" style="left:693.5px;top:137.1px" width="23.0" height="23.0" viewBox="0 0 16 16" ><path fill="none" stroke="#9a9a9a" stroke-width="1.15" d="M5.7 2.6 L10.6 8 L5.7 13.4"/></svg>
<svg class="abs" style="left:719.7px;top:133.5px" width="29.0" height="29.0" viewBox="0 0 24 24" ><g fill="none" stroke="#0f7fd6" stroke-width="1.55"><ellipse cx="12" cy="12" rx="10.6" ry="4.1"/><ellipse cx="12" cy="12" rx="10.6" ry="4.1" transform="rotate(60 12 12)"/><ellipse cx="12" cy="12" rx="10.6" ry="4.1" transform="rotate(120 12 12)"/><circle cx="12" cy="12" r="1.75" stroke-width="1.5"/></g></svg>
<span class="t fs" style="left:759.5px;top:136.2px;font-size:24.6px;color:#a2a2a2;letter-spacing:-0.35px;">NewTodo.tsx</span>
<svg class="abs" style="left:903.5px;top:137.1px" width="23.0" height="23.0" viewBox="0 0 16 16" ><path fill="none" stroke="#9a9a9a" stroke-width="1.15" d="M5.7 2.6 L10.6 8 L5.7 13.4"/></svg>
<svg class="abs" style="left:937.3px;top:139.5px" width="27.0" height="18.5" viewBox="0 0 30 21" ><g fill="none" stroke="#3b9be6" stroke-width="2"><path d="M6 1.200H1.200V19.800H6M24 1.200h4.800V19.800H24"/><path d="M9 8.500l6-3 6 3v5.500l-6 3-6-3z"/><path d="M9 8.500l6 2.800 6-2.800M15 11.300v5.500"/></g></svg>
<span class="t fs" style="left:970.2px;top:136.2px;font-size:24.6px;color:#a2a2a2;letter-spacing:-0.24px;">NewTodo</span>
<div class="abs" style="left:460px;top:746px;width:1330px;height:246px;background:#1b1b1b"></div>
<div class="abs" style="left:460px;top:745.6px;width:1330px;height:2.2px;background:#3a3a3a"></div>
<span class="t fs" style="left:497.4px;top:771.4px;font-size:21.2px;color:#8f8f8f;transform:scaleX(0.9219);transform-origin:0 0;">PROBLEMS</span>
<span class="t fs" style="left:645.0px;top:771.4px;font-size:21.2px;color:#8f8f8f;transform:scaleX(0.9518);transform-origin:0 0;">OUTPUT</span>
<span class="t fs" style="left:768.0px;top:771.4px;font-size:21.2px;color:#e7e7e7;transform:scaleX(0.9279);transform-origin:0 0;">TERMINAL</span>
<div class="abs" style="left:768px;top:807.4px;width:100px;height:1.8px;background:#555555"></div>
<svg class="abs" style="left:921.0px;top:779.5px" width="28.0" height="6.0" viewBox="0 0 28 6" ><g fill="#c4c4c4"><circle cx="3.4" cy="3" r="2.1"/><circle cx="14" cy="3" r="2.1"/><circle cx="24.6" cy="3" r="2.1"/></g></svg>
<div class="abs" style="left:1135.5px;top:764.8px;width:309px;height:33px;background:#3a3a3a;border-radius:4px"></div>
<span class="t fs" style="left:1151.0px;top:771.6px;font-size:21.3px;color:#e0e0e0;letter-spacing:-0.64px;">1: node</span>
<svg class="abs" style="left:1423.5px;top:770.5px" width="13.0" height="22.0" viewBox="0 0 13 22" ><path d="M6.500 1.500L11.800 8.800H1.200zM6.500 20.500L11.800 13.200H1.200z" fill="#e8e8e8"/></svg>
<svg class="abs" style="left:1477.0px;top:767.4px" width="26.0" height="26.0" viewBox="0 0 26 26" ><path d="M13 0.500v25M0.500 13h25" fill="none" stroke="#d0d0d0" stroke-width="1.9"/></svg>
<svg class="abs" style="left:1541.0px;top:767.2px" width="26.0" height="26.0" viewBox="0 0 26 26" ><g fill="none" stroke="#d0d0d0" stroke-width="1.9"><rect x="1.200" y="1.200" width="23.600" height="23.600" rx="2.400"/><path d="M13 1.200v23.600"/></g></svg>
<svg class="abs" style="left:1603.5px;top:766.8px" width="22.0" height="27.0" viewBox="0 0 22 27" ><g fill="none" stroke="#d0d0d0" stroke-width="1.8"><path d="M0.800 5.500h20.400"/><path d="M7 5V2.600a1.600 1.600 0 0 1 1.600-1.600h4.800A1.600 1.600 0 0 1 15 2.600V5"/><path d="M3 5.500l0.900 18.300a2 2 0 0 0 2 1.900h10.200a2 2 0 0 0 2-1.900L19 5.500"/><path d="M7.600 9v13M11 9v13M14.400 9v13"/></g></svg>
<svg class="abs" style="left:1665.5px;top:772.5px" width="23.0" height="14.0" viewBox="0 0 23 14" ><path d="M1 12.500L11.500 2L22 12.500" fill="none" stroke="#d0d0d0" stroke-width="2"/></svg>
<svg class="abs" style="left:1730.7px;top:771.9px" width="17.5" height="17.5" viewBox="0 0 17.5 17.5" ><path fill="none" stroke="#d6d6d6" stroke-width="1.9" d="M0.5 0.5 L17.0 17.0 M17.0 0.5 L0.5 17.0"/></svg>
<span class="t fm" style="left:524.4px;top:826.6px;font-size:22.589px;color:#d2d2d2;font-weight:bold;">On Your Network:</span>
<span class="t fm" style="left:769.2px;top:826.6px;font-size:22.589px;color:#cfcfcf;">http:</span>
<span class="t fm" style="left:837.2px;top:826.6px;font-size:22.589px;color:#cfcfcf;">//192.168.178.45:</span>
<span class="t fm" style="left:1068.4px;top:826.6px;font-size:22.589px;color:#d2d2d2;font-weight:bold;">3000</span>
<span class="t fm" style="left:1122.8px;top:826.6px;font-size:22.589px;color:#cfcfcf;">/</span>
<span class="t fm" style="left:497.2px;top:881.2px;font-size:22.589px;color:#cccccc;">Note that the development build is not optimized.</span>
<span class="t fm" style="left:497.2px;top:908.5px;font-size:22.589px;color:#cccccc;">To create a production build, use </span>
<span class="t fm" style="left:959.6px;top:908.5px;font-size:22.589px;color:#2b98d4;">yarn build</span>
<span class="t fm" style="left:1095.6px;top:908.5px;font-size:22.589px;color:#cccccc;">.</span>
<div class="abs" style="left:497.2px;top:960.4px;width:14.4px;height:27px;border:2px solid #c8c8c8"></div>
<span class="t fs" style="left:1722.9px;top:962.8px;font-size:18.3px;color:#8a8a8a;letter-spacing:-0.13px;-webkit-text-stroke:0.2px #8a8a8a;">ûdemy</span>
</div></div></div>
<div class="abs" style="left:0;top:992px;width:1920px;height:1.2px;background:#fafafa"></div>
<div class="abs" style="left:59.5px;top:996px;width:1802.5px;height:9px;border-radius:4.5px;background:linear-gradient(#b6b7b8,#dadbdc)"></div>
<div class="abs" style="left:59.5px;top:996.8px;width:1028.4px;height:8.2px;border-radius:4.1px;background:linear-gradient(#2b88e0,#2977c9)"></div>
<div class="abs btn" style="left:4.2px;top:1012.3px;width:29.6px;height:29.4px"></div>
<div class="abs btn" style="left:48.1px;top:1015.2px;width:23.5px;height:23.4px"></div>
<div class="abs btn" style="left:74.1px;top:1015.2px;width:23.5px;height:23.4px"></div>
<div class="abs btn" style="left:100.2px;top:1015.2px;width:23.5px;height:23.4px"></div>
<div class="abs btn" style="left:138.2px;top:1015.2px;width:23.5px;height:23.4px"></div>
<div class="abs btn" style="left:164.2px;top:1015.2px;width:23.5px;height:23.4px"></div>
<div class="abs btn" style="left:202.2px;top:1015.2px;width:23.5px;height:23.4px"></div>
<div class="abs btn" style="left:228.2px;top:1015.2px;width:23.5px;height:23.4px"></div>
<div class="abs btn" style="left:254.2px;top:1015.2px;width:23.5px;height:23.4px"></div>
<svg class="abs" style="left:12.2px;top:1018.4px" width="14.0" height="17.6" viewBox="0 0 14 17.6" ><path d="M0.200 0.200L13.800 8.800L0.200 17.400z" fill="#6f6f6f"/></svg>
<svg class="abs" style="left:52.4px;top:1022.0px" width="15.6" height="10.0" viewBox="0 0 15.600 10" ><path d="M0 0h3.400v10H0zM9.400 0v10L3.600 5zM15.600 0v10L9.600 5z" fill="#6f6f6f"/></svg>
<svg class="abs" style="left:80.9px;top:1022.0px" width="10.2" height="10.0" viewBox="0 0 10 10" ><rect width="10" height="10" fill="#6f6f6f"/></svg>
<svg class="abs" style="left:104.3px;top:1022.0px" width="15.6" height="10.0" viewBox="0 0 15.600 10" ><path d="M15.600 0h-3.400v10h3.400zM6.200 0v10L12 5zM0 0v10L6 5z" fill="#6f6f6f"/></svg>
<svg class="abs" style="left:141.6px;top:1020.2px" width="16.8" height="13.6" viewBox="0 0 16.800 13.600" ><path d="M1.300 4.600V1.300H5.400M11.400 1.300h4.100V4.600M15.500 9v3.300h-4.100M5.400 12.300H1.300V9" fill="none" stroke="#6f6f6f" stroke-width="2.6"/></svg>
<svg class="abs" style="left:166.8px;top:1020.0px" width="18.4" height="14.0" viewBox="0 0 18.400 14" ><g fill="none" stroke="#6f6f6f"><path d="M3.400 0.500v13M9.200 0.500v13M15 0.500v13" stroke-width="2.200"/><path d="M1.200 3.600h4.400M7 10.400h4.400M12.800 5.800h4.400" stroke-width="2.600"/></g></svg>
<svg class="abs" style="left:206.8px;top:1020.0px" width="14.6" height="14.4" viewBox="0 0 14.600 14.400" ><path d="M0.200 1.200h13.800M0.200 6h13.800M0.200 11.200h8" fill="none" stroke="#6f6f6f" stroke-width="2.200"/><path d="M9.800 8.200L14.600 11.200L9.800 14.200z" fill="#6f6f6f"/></svg>
<svg class="abs" style="left:232.0px;top:1018.6px" width="16.0" height="16.4" viewBox="0 0 16 16.400" ><g fill="none" stroke="#6f6f6f" stroke-width="2.200"><path d="M1.500 8V6.400A2.600 2.600 0 0 1 4.100 3.800H13"/><path d="M14.500 8.400V10A2.600 2.600 0 0 1 11.900 12.600H3"/></g><path d="M11.600 0.600L15.800 3.800L11.600 7zM4.400 9.400L0.200 12.600L4.400 15.800z" fill="#6f6f6f"/></svg>
<svg class="abs" style="left:258.4px;top:1019.6px" width="15.4" height="14.4" viewBox="0 0 15.400 14.400" ><g fill="none" stroke="#6f6f6f" stroke-width="2.200"><path d="M0.800 13.400L13.200 1.600"/><path d="M0.800 1.400L5.400 5.800M9.400 9.600L13 13"/></g><path d="M9.400 0.200H15V5.800zM15 8.800V14.400H9.400z" fill="#6f6f6f"/></svg>
<span class="t fu" style="left:10.3px;top:995.6px;font-size:12px;color:#232629;transform:scaleX(0.9426);transform-origin:0 0;">00:35</span>
<span class="t fu" style="left:1880.2px;top:995.6px;font-size:12px;color:#232629;transform:scaleX(0.9544);transform-origin:0 0;">01:02</span>
<svg class="abs" style="left:1819.6px;top:1028.6px" width="15.0" height="12.6" viewBox="0 0 15 12.600" ><path d="M0.400 3.800H2.600L6 0.400V12.200L2.600 8.800H0.400z" fill="#6f6f6f"/><g fill="none" stroke="#f7941d" stroke-width="1.100"><path d="M7.600 4.200a3 3 0 0 1 0 4.400"/><path d="M9.400 2.400a5.400 5.400 0 0 1 0 8"/><path d="M11.200 0.600a8 8 0 0 1 0 11.600"/></g></svg>
<svg class="abs" style="left:1840.0px;top:1018.0px" width="75.0" height="23.5" viewBox="0 0 75 23.500" ><defs><linearGradient id="vg" x1="0" x2="1" y1="0" y2="0"><stop offset="0" stop-color="#8fdc8f"/><stop offset="0.45" stop-color="#52d052"/><stop offset="0.76" stop-color="#18c818"/><stop offset="0.853" stop-color="#e6c800"/><stop offset="0.857" stop-color="#ffffff"/><stop offset="1" stop-color="#ffffff"/></linearGradient></defs><path d="M1.600 22.600L72 1.300a1.200 1.200 0 0 1 1.600 1.100V21.400a1.200 1.200 0 0 1-1.200 1.200z" fill="url(#vg)" stroke="#6a6a6a" stroke-width="1.200" stroke-linejoin="round"/></svg>
<span class="t fu" style="left:1846.8px;top:1021.0px;font-size:8.6px;color:#9b9b9b;transform:scaleX(0.8933);transform-origin:0 0;">105%</span>
</body>
</html>
